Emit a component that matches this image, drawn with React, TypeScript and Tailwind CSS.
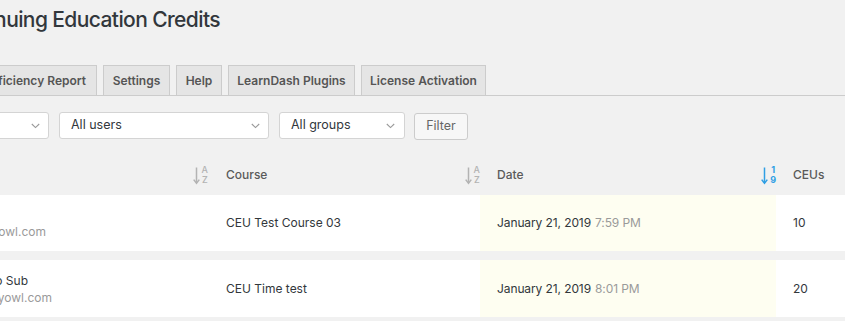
import React from "react";

function SortIcon({ top, bottom, active }: { top: string; bottom: string; active?: boolean }) {
  const color = active ? "text-[#2f9fe4]" : "text-[#b3b3b3]";
  const weight = active ? "font-bold" : "font-medium";
  return (
    <span className={`inline-flex items-center gap-[2px] ${color}`}>
      <svg width="7" height="19" viewBox="0 0 7 19" fill="none">
        <path d="M3.5 1.5V17" stroke="currentColor" strokeWidth="1.5" />
        <path d="M0.7 13.6L3.5 17.3L6.3 13.6" stroke="currentColor" strokeWidth="1.5" />
      </svg>
      <span className={`flex flex-col items-center text-[9px] leading-[10px] ${weight}`}>
        <span>{top}</span>
        <span>{bottom}</span>
      </span>
    </span>
  );
}

function Chevron() {
  return (
    <svg width="9" height="6" viewBox="0 0 9 6" fill="none">
      <path d="M0.8 1L4.5 4.6L8.2 1" stroke="#9a9a9a" strokeWidth="1.1" />
    </svg>
  );
}

function Tab({ children, width }: { children: React.ReactNode; width: string }) {
  return (
    <div
      className={`h-[30px] flex items-center justify-center border border-b-0 border-[#cccccc] bg-[#e5e5e5] text-[12px] font-semibold text-[#555555] whitespace-nowrap shrink-0 ${width}`}
    >
      {children}
    </div>
  );
}

function RightLine({ width, children, cls }: { width: string; children: React.ReactNode; cls: string }) {
  return (
    <div className={`flex justify-end ${width}`}>
      <span className={`shrink-0 whitespace-nowrap ${cls}`}>{children}</span>
    </div>
  );
}

export default function App() {
  return (
    <div className="w-[845px] h-[321px] overflow-hidden bg-[#f1f1f1] font-['Inter','Noto_Sans',sans-serif] text-[#32373c]">
      {/* Title */}
      <div className="h-[65px] pt-[5px]">
        <div className="flex justify-end w-[220px]">
          <h1 className="shrink-0 whitespace-nowrap text-[21px] leading-[29px] font-medium text-[#32373c] tracking-[-0.6px]">
            Continuing Education Credits
          </h1>
        </div>
      </div>

      {/* Tabs */}
      <div className="h-[31px] border-b border-[#cccccc] flex items-start gap-[6px]">
        <div className="ml-[-40px] w-[137px] h-[30px] flex items-center justify-end border border-b-0 border-[#cccccc] bg-[#e5e5e5] pr-[10px] text-[12px] font-semibold text-[#555555] shrink-0 overflow-hidden">
          <span className="shrink-0 whitespace-nowrap">Proficiency Report</span>
        </div>
        <Tab width="w-[67px]">Settings</Tab>
        <Tab width="w-[46px]">Help</Tab>
        <Tab width="w-[127px]">LearnDash Plugins</Tab>
        <Tab width="w-[125px]">License Activation</Tab>
      </div>

      {/* Filters */}
      <div className="mt-[16px] flex items-start gap-[10px] text-[12.5px]">
        <div className="ml-[-120px] w-[169px] h-[27px] rounded-[3px] border border-[#d4d4d4] bg-white flex items-center justify-between pl-[11px] pr-[8px] shrink-0">
          <span className="whitespace-nowrap">All courses</span>
          <Chevron />
        </div>
        <div className="w-[210px] h-[27px] rounded-[3px] border border-[#d4d4d4] bg-white flex items-center justify-between pl-[11px] pr-[8px] shrink-0">
          <span className="whitespace-nowrap">All users</span>
          <Chevron />
        </div>
        <div className="w-[126px] h-[27px] rounded-[3px] border border-[#d4d4d4] bg-white flex items-center justify-between pl-[11px] pr-[9px] shrink-0">
          <span className="whitespace-nowrap">All groups</span>
          <Chevron />
        </div>
        <button className="mt-[1px] ml-[-1px] w-[54px] h-[27px] rounded-[3px] border border-[#cccccc] bg-[#f7f7f7] text-[#666666] text-[12.5px] flex items-center justify-center shrink-0">
          Filter
        </button>
      </div>

      {/* Header */}
      <div className="mt-[15px] h-[40px] grid grid-cols-[210px_270px_296px_1fr] items-center text-[12px] font-medium text-[#5a5a5a]">
        <div className="flex justify-end pr-[2px]">
          <SortIcon top="A" bottom="Z" />
        </div>
        <div className="flex items-center justify-between pl-[16px]">
          <span>Course</span>
          <SortIcon top="A" bottom="Z" />
        </div>
        <div className="flex items-center justify-between pl-[17px]">
          <span>Date</span>
          <SortIcon top="1" bottom="9" active />
        </div>
        <div className="pl-[17px]">CEUs</div>
      </div>

      {/* Rows */}
      <div className="flex flex-col gap-[9px] text-[12px]">
        <div className="h-[56px] bg-white grid grid-cols-[210px_270px_296px_1fr] items-stretch">
          <div className="flex flex-col justify-center leading-[17px]">
            <RightLine width="w-0" cls="text-[#32373c] pr-[8px]">Admin</RightLine>
            <RightLine width="w-[46px]" cls="text-[#9a9a9a]">admin@ceuprowl.com</RightLine>
          </div>
          <div className="flex items-center pl-[16px]">CEU Test Course 03</div>
          <div className="flex items-center pl-[17px] bg-[#fefef1] tracking-[-0.1px]">
            <span>January 21, 2019</span>
            <span className="ml-[4px] text-[#9a9a9a]">7:59 PM</span>
          </div>
          <div className="flex items-center pl-[17px]">10</div>
        </div>
        <div className="h-[57px] bg-white grid grid-cols-[210px_270px_296px_1fr] items-stretch">
          <div className="flex flex-col justify-center leading-[17px]">
            <RightLine width="w-[28px]" cls="text-[#32373c]">Demo Sub</RightLine>
            <RightLine width="w-[52px]" cls="text-[#9a9a9a]">sub@ceuyowl.com</RightLine>
          </div>
          <div className="flex items-center pl-[16px]">CEU Time test</div>
          <div className="flex items-center pl-[17px] bg-[#fefef1] tracking-[-0.1px]">
            <span>January 21, 2019</span>
            <span className="ml-[4px] text-[#9a9a9a]">8:01 PM</span>
          </div>
          <div className="flex items-center pl-[17px]">20</div>
        </div>
      </div>
    </div>
  );
}
